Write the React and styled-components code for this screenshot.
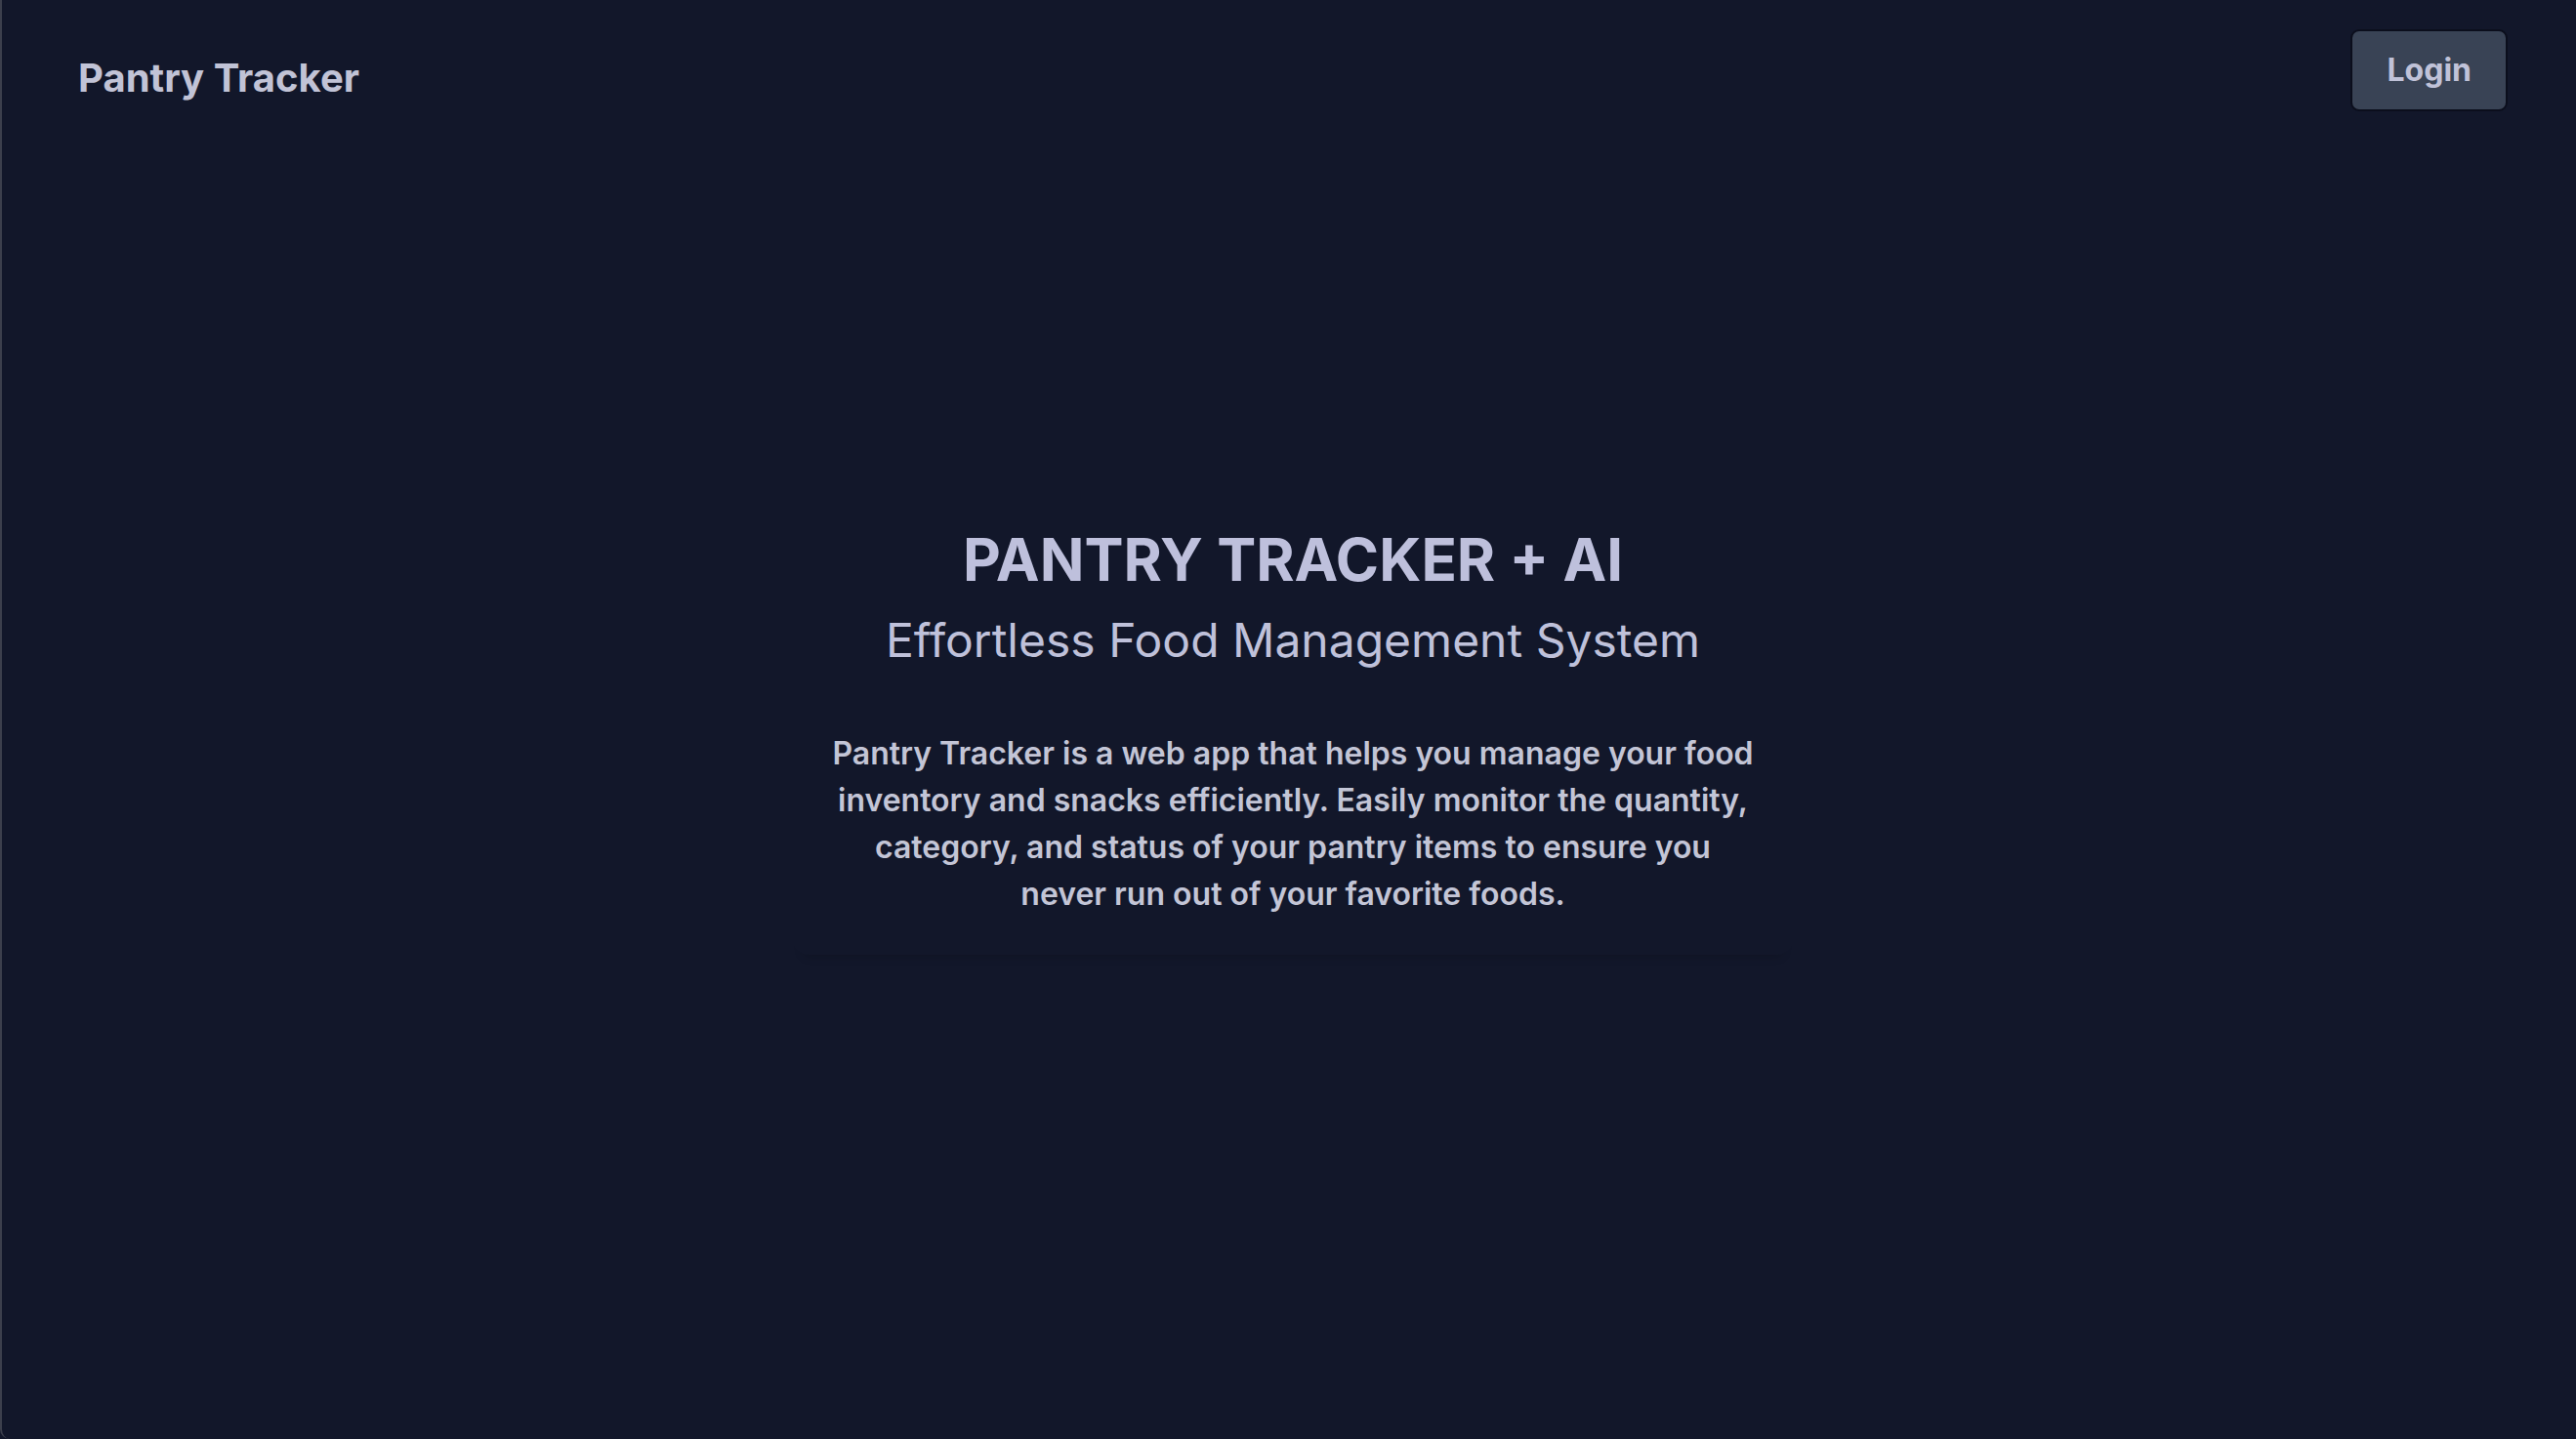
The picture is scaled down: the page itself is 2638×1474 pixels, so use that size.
import React from 'react'
import styled, {createGlobalStyle} from 'styled-components'

const GlobalStyle = createGlobalStyle`
    html, body {
        margin: 0;
        padding: 0;
        background: #12172a;
    }
    body {
        font-family: Inter, "Noto Sans", "Liberation Sans", sans-serif;
        color: #c1c3d6;
    }
    * {
        box-sizing: border-box;
    }
`

const Page = styled.div`
    min-height: 100vh;
    display: flex;
    flex-direction: column;
    background: #12172a;
    border-left: 2px solid #3c3f4c;
    border-bottom-left-radius: 10px;
`

const Header = styled.header`
    height: 144px;
    display: flex;
    justify-content: space-between;
    align-items: flex-start;
    padding: 30px 70px 0 78px;
`

const Logo = styled.div`
    padding-top: 25px;
    font-size: 40px;
    font-weight: 700;
    line-height: normal;
    color: #c1c3d6;
`

const LoginButton = styled.button`
    height: 84px;
    padding: 0 35px;
    font-family: inherit;
    font-size: 32px;
    font-weight: 700;
    line-height: 1.2;
    color: #c0c2d8;
    background: #394355;
    border: 2px solid #0b0e1c;
    border-radius: 9px;
    cursor: pointer;
`

const Main = styled.main`
    flex: 1;
    display: flex;
    align-items: center;
    justify-content: center;
    padding: 0 0 144px 8px;
`

const HeroCard = styled.section`
    width: 1024px;
    padding: 40px 40px 38px;
    display: flex;
    flex-direction: column;
    align-items: center;
    text-align: center;
    border-radius: 16px;
    box-shadow: 0 12px 10px -10px rgba(0, 0, 0, 0.16);
`

const Title = styled.h1`
    margin: 0;
    font-size: 60px;
    line-height: 72px;
    font-weight: 700;
    color: #bec0dc;
`

const Subtitle = styled.h2`
    margin: 17px 0 0;
    font-size: 48px;
    line-height: 60px;
    font-weight: 400;
    color: #bfc1da;
`

const Description = styled.p`
    margin: 62px 0 0;
    max-width: 950px;
    font-size: 32px;
    line-height: 48px;
    font-weight: 600;
    color: #c3c5d6;
`

export default function App() {
    return (
        <>
            <GlobalStyle />
            <Page>
                <Header>
                    <Logo>Pantry Tracker</Logo>
                    <LoginButton>Login</LoginButton>
                </Header>
                <Main>
                    <HeroCard>
                        <Title>PANTRY TRACKER + AI</Title>
                        <Subtitle>Effortless Food Management System</Subtitle>
                        <Description>
                            Pantry Tracker is a web app that helps you manage your food
                            inventory and snacks efficiently. Easily monitor the quantity,
                            category, and status of your pantry items to ensure you
                            never run out of your favorite foods.
                        </Description>
                    </HeroCard>
                </Main>
            </Page>
        </>
    )
}
